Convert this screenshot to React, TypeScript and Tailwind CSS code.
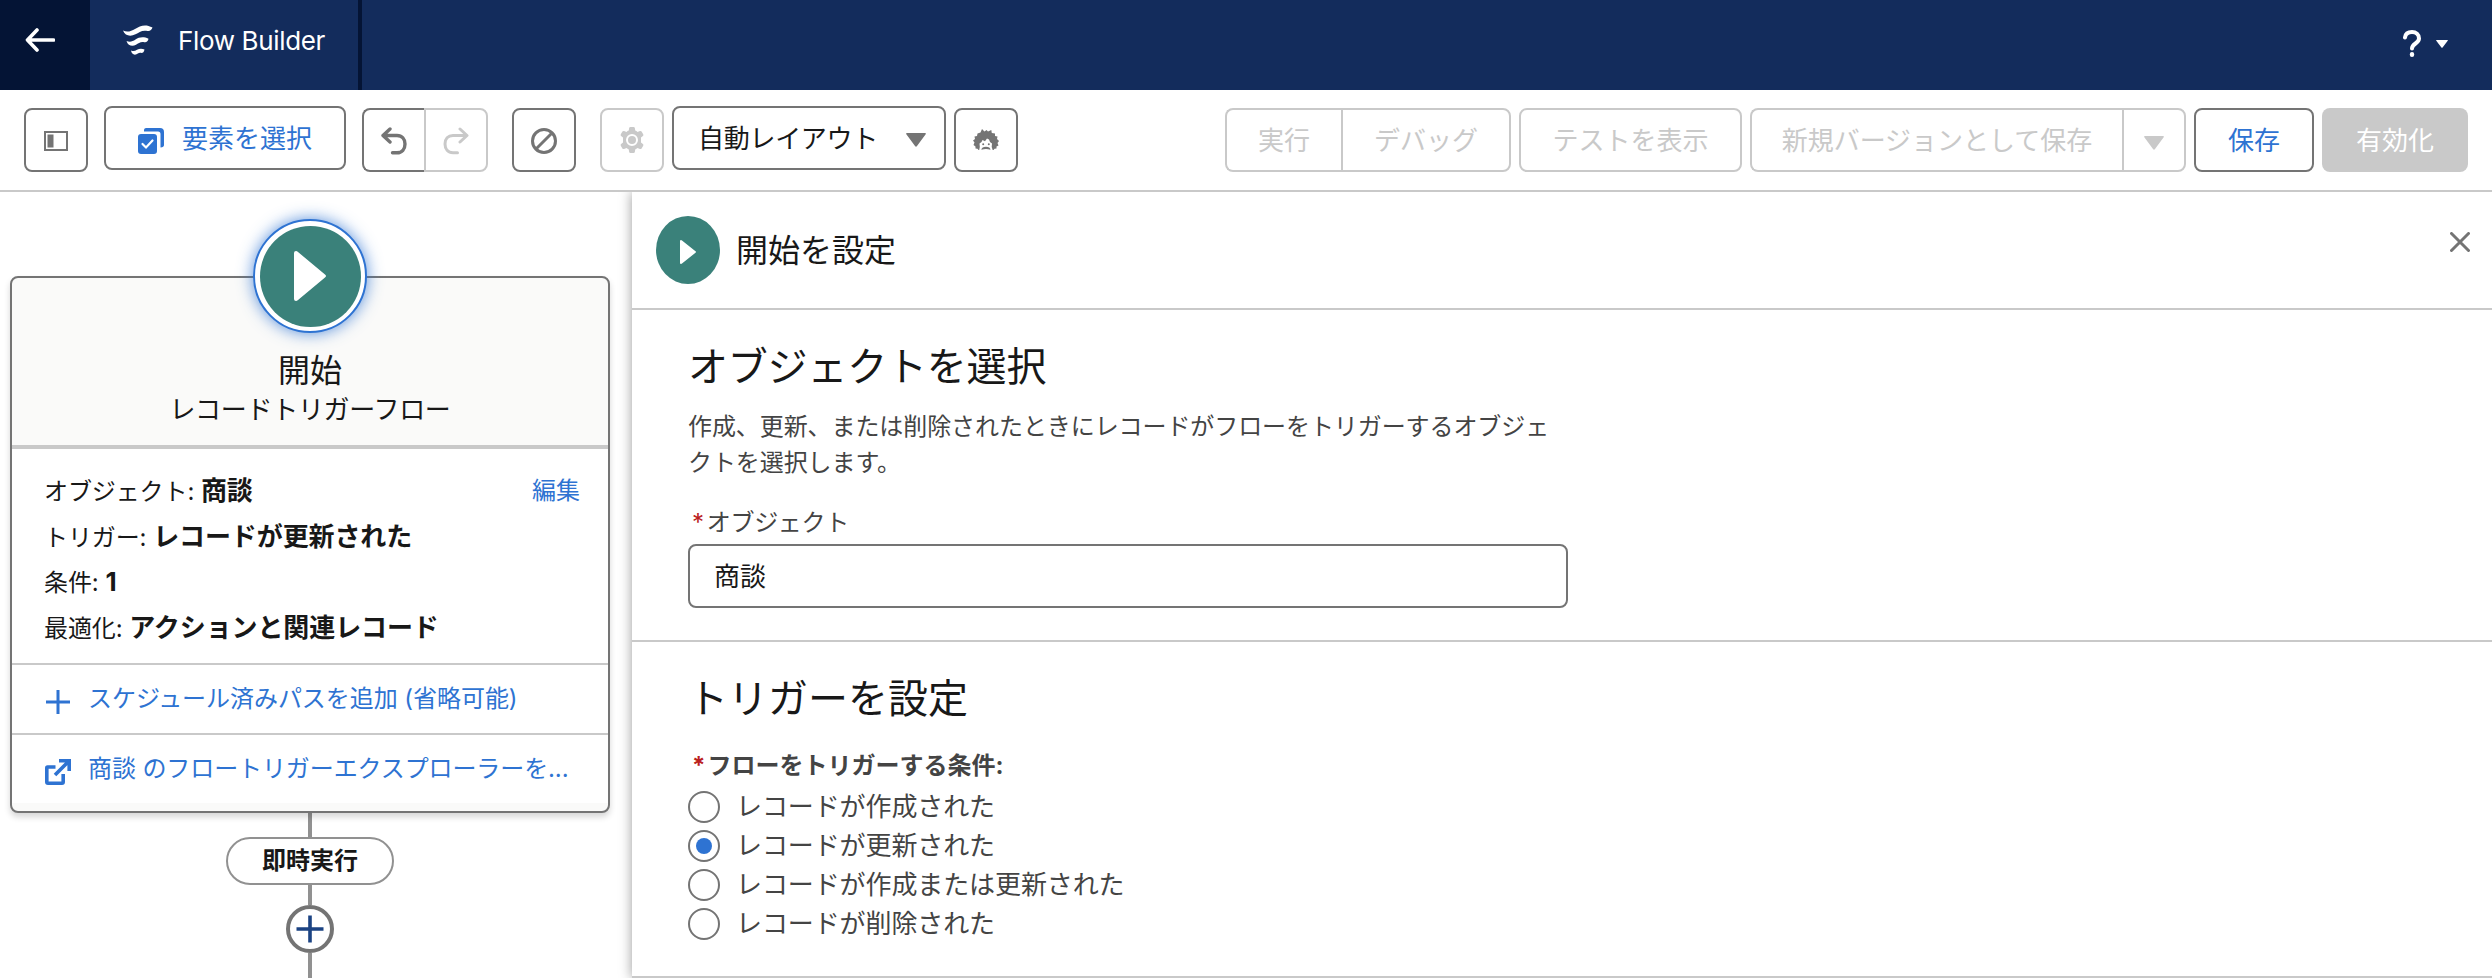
import { useState, type ReactNode } from "react"
import clsx from "clsx"

const triggerOptions = [
  "レコードが作成された",
  "レコードが更新された",
  "レコードが作成または更新された",
  "レコードが削除された",
]

const startDetails = [
  { label: "オブジェクト:", value: "商談" },
  { label: "トリガー:", value: "レコードが更新された" },
  { label: "条件:", value: "1" },
  { label: "最適化:", value: "アクションと関連レコード" },
]

const FlowLogo = () => (
  <svg className="h-8 w-8" viewBox="0 0 32 32" fill="#fff">
    <path d="M1 6.5C5 8.5 9 7.5 13 5C18 2 23 -.5 30.500 3.500C29.500 6 28 7.500 25.500 7C20 5.800 17 8.500 13.500 10.300C8.500 12.800 3 12 1 6.500Z" />
    <path d="M4.500 17C8 18.500 10.500 17.500 13.500 15.500C17 13.200 21.500 12.300 26.500 14.800C26 17.200 24.500 18.700 22.200 18.200C18.500 17.500 16.500 19.300 14 20.800C10.500 22.800 6 22 4.500 17Z" />
    <path d="M9 26.500C11.500 27.500 13 27 15 25.800C17.500 24.300 20 24.300 22.500 25.500C22 28.500 20.500 29.200 18.500 28.800C17 28.500 16 29.500 14.500 30.300C12 31.300 9.500 30 9 26.500Z" />
  </svg>
)

const Play = ({ className }: { className: string }) => (
  <svg className={className} viewBox="0 0 32 50" preserveAspectRatio="none" fill="#fff">
    <path d="M0 2Q0 0 2 0Q3 0 4 1L31 23.500Q33 25 31 26.500L4 49Q3 50 2 50Q0 50 0 48Z" />
  </svg>
)

const Caret = ({ className }: { className: string }) => (
  <svg className={className} viewBox="0 0 20 14" preserveAspectRatio="none" fill="currentColor">
    <path d="M1 0H19Q20.500 0 19.500 1.500L11 13Q10 14.500 9 13L.5 1.500Q-.5 0 1 0Z" />
  </svg>
)

const EinsteinIcon = () => (
  <svg className="h-[22px] w-[26px]" viewBox="0 0 26 22">
    <path
      fill="#747474"
      d="M7.500 3.500L9 0L11.500 2.500L13.500 1L15 2.600L18.300 1L18.800 4L22 4.500L22 7L24.500 7.500L24 10L26 12L24.500 14L25.500 16.500L23.500 17.500L23.500 19.500L21.500 19.800L20.500 21L5.500 21L4.500 19.800L2.500 19.500L2.500 17.500L.5 16L1.500 13.500L0 11.500L2 10L1.500 7.500L4 7L4.500 4.500Z"
    />
    <path fill="#fff" d="M6 22L6.800 18L6.500 14.500L8.500 13L9.500 11L12 12.200L14 9.500L16 10.500L17 13L19 14.500L18.700 18L20 22Z" />
    <circle cx="10.200" cy="15.200" r="1" fill="#747474" />
    <circle cx="15.800" cy="15.200" r="1" fill="#747474" />
    <path fill="#747474" d="M8.300 20.800Q8.800 17.800 13 17.800T17.500 20.800Q15 20 13 20T8.300 20.800Z" />
  </svg>
)

const GearIcon = () => (
  <svg className="h-[26px] w-6" viewBox="0 0 24 26">
    <path
      fill="#c9c9c9"
      fillRule="evenodd"
      d="M10.500 0H13.500Q14.700 0 14.900 1.200L15.200 3.600Q16.500 4.100 17.500 4.900L19.900 4Q21 3.600 21.600 4.600L23.200 7.200Q23.800 8.200 22.900 9L21 10.600V15.400L22.900 17Q23.800 17.800 23.200 18.800L21.600 21.400Q21 22.400 19.900 22L17.500 21.100Q16.500 21.900 15.200 22.400L14.900 24.800Q14.700 26 13.500 26H10.500Q9.300 26 9.100 24.800L8.800 22.400Q7.500 21.900 6.500 21.100L4.100 22Q3 22.400 2.400 21.400L.8 18.800Q.2 17.800 1.100 17L3 15.400V10.600L1.100 9Q.2 8.200 .8 7.200L2.400 4.600Q3 3.600 4.100 4L6.500 4.900Q7.500 4.100 8.800 3.600L9.100 1.200Q9.300 0 10.500 0ZM12 7A6 6 0 1 0 12 19A6 6 0 1 0 12 7Z"
    />
    <circle cx="12" cy="13" r="4" fill="#c9c9c9" />
  </svg>
)

const ToolButton = ({ children, className }: { children: ReactNode; className?: string }) => (
  <button
    className={clsx("flex h-16 shrink-0 items-center justify-center border-2 bg-white", className)}
  >
    {children}
  </button>
)

const Header = () => (
  <header className="flex h-[90px] bg-[#132c5c] text-white">
    <button className="flex w-[90px] items-center bg-[#041435] pb-[10px] pl-[25px]">
      <svg className="h-6 w-[30px]" viewBox="0 0 30 24" fill="none" stroke="#fff" strokeWidth="3.600" strokeLinecap="round" strokeLinejoin="round">
        <path d="M12 2L2.500 12L12 22M3 12H28.500" />
      </svg>
    </button>
    <div className="flex w-[272px] items-center border-r-4 border-[#041435] pb-[10px] pl-8">
      <FlowLogo />
      <span className="ml-6 text-[26px] tracking-[-0.35px]">Flow Builder</span>
    </div>
    <div className="ml-auto flex items-center gap-[15px] pb-[3px] pr-[44px]">
      <svg className="h-[27px] w-[18px]" viewBox="0 0 18 27" fill="none" stroke="#fff" strokeWidth="4" strokeLinecap="round">
        <path d="M2 7.500C2.500 3.500 5.500 2 9 2C13 2 16 4.500 16 8.500C16 13.500 9 13.500 9 18.500" />
        <path d="M9 24.200V24.800" strokeWidth="4.400" />
      </svg>
      <Caret className="h-2 w-3" />
    </div>
  </header>
)

const Toolbar = () => (
  <div className="flex h-[102px] items-start justify-between border-b-2 border-[#c9c9c9] bg-white px-6 pt-[18px] text-[26px]">
    <div className="flex">
      <ToolButton className="w-16 rounded-lg border-[#747474]">
        <svg className="mt-[2px] h-5 w-6" viewBox="0 0 24 20">
          <rect x="1" y="1" width="22" height="18" fill="none" stroke="#747474" strokeWidth="2" />
          <rect x="3.500" y="3.500" width="6" height="13" fill="#747474" />
        </svg>
      </ToolButton>
      <ToolButton className="-mt-[2px] ml-4 w-[242px] gap-[18px] rounded-lg border-[#747474] text-[#2e73d2]">
        <svg className="mt-[6px] h-[26px] w-[26px]" viewBox="0 0 26 26">
          <path d="M6 1.800Q6.300 0 8 0H22Q26 0 26 4V17Q26 19 22.500 19.500V6Q22.500 3.500 20 3.500H6Z" fill="#2e73d2" />
          <rect x="0" y="6" width="19" height="20" rx="3" fill="#2e73d2" />
          <path d="M4.500 16L8 19.500L14.500 12.500" fill="none" stroke="#fff" strokeWidth="2.200" strokeLinecap="round" />
        </svg>
        <span>要素を選択</span>
      </ToolButton>
      <ToolButton className="ml-4 w-[62px] rounded-l-lg border-r-0 border-[#747474]">
        <svg className="mt-[2px] h-[28px] w-[26px]" viewBox="0 0 26 28" fill="none" stroke="#747474" strokeWidth="3.400" strokeLinecap="round" strokeLinejoin="round">
          <path d="M9 2L2 8.500L9 15M3 8.500H16C21 8.500 24 12 24 17S21 25.800 16 25.800H11.500" />
        </svg>
      </ToolButton>
      <ToolButton className="w-16 rounded-r-lg border-[#c9c9c9]">
        <svg className="mt-[2px] h-[28px] w-[26px]" viewBox="0 0 26 28" fill="none" stroke="#c9c9c9" strokeWidth="3" strokeLinecap="round" strokeLinejoin="round">
          <path d="M17 2L24 8.500L17 15M23 8.500H10C5 8.500 2 12 2 17S5 25.800 10 25.800H14.500" />
        </svg>
      </ToolButton>
      <ToolButton className="ml-6 w-16 rounded-lg border-[#747474]">
        <svg className="mt-[2px] h-[26px] w-[26px]" viewBox="0 0 26 26" fill="none" stroke="#747474" strokeWidth="3">
          <circle cx="13" cy="13" r="11.500" />
          <path d="M5 21L21 5" />
        </svg>
      </ToolButton>
      <ToolButton className="ml-6 w-16 rounded-lg border-[#c9c9c9]">
        <GearIcon />
      </ToolButton>
      <ToolButton className="-mt-[2px] ml-2 w-[274px] rounded-lg border-[#747474] pl-[6px] text-[#181818]">
        <span className="tracking-[-0.3px]">自動レイアウト</span>
        <Caret className="ml-[28px] mt-[4px] h-[14px] w-5 text-[#747474]" />
      </ToolButton>
      <ToolButton className="ml-2 w-16 rounded-lg border-[#747474]">
        <EinsteinIcon />
      </ToolButton>
    </div>
    <div className="flex text-[#c9c9c9]">
      <ToolButton className="w-[116px] rounded-l-lg border-r-0 border-[#c9c9c9]">実行</ToolButton>
      <ToolButton className="w-[170px] rounded-r-lg border-[#c9c9c9]">デバッグ</ToolButton>
      <ToolButton className="ml-2 w-[223px] rounded-lg border-[#c9c9c9]">テストを表示</ToolButton>
      <ToolButton className="ml-2 w-[372px] rounded-l-lg border-r-0 border-[#c9c9c9]">新規バージョンとして保存</ToolButton>
      <ToolButton className="w-16 rounded-r-lg border-[#c9c9c9]">
        <Caret className="mt-[6px] h-[14px] w-5" />
      </ToolButton>
      <ToolButton className="ml-2 w-[120px] rounded-lg border-[#747474] text-[#2e73d2]">保存</ToolButton>
      <button className="ml-2 h-16 w-[146px] rounded-lg bg-[#c9c9c9] text-white">有効化</button>
    </div>
  </div>
)

const StartCard = () => (
  <div className="relative w-[600px] rounded-[8px] border-2 border-[#747474] bg-[#fafaf9] pb-2 text-[24px] text-[#181818] shadow-[0_4px_6px_rgba(0,0,0,0.16)]">
    <div className="absolute -top-[59px] left-[241px] flex h-[114px] w-[114px] items-center justify-center rounded-full border-2 border-[#2e73d2] bg-white shadow-[0_0_16px_rgba(46,115,210,0.8)]">
      <div className="flex h-[101px] w-[101px] items-center justify-center rounded-full bg-[#3a817a]">
        <Play className="h-[50px] w-8" />
      </div>
    </div>
    <div className="flex h-[171px] flex-col items-center border-b-4 border-[#c9c9c9] pt-[73px]">
      <h2 className="text-[32px] leading-[40px]">開始</h2>
      <p className="text-[26px] leading-[38px] tracking-[-0.3px]">レコードトリガーフロー</p>
    </div>
    <div className="relative h-[216px] border-b-2 border-[#c9c9c9] bg-white px-8 pt-[19px]">
      {startDetails.map((item) => (
        <p key={item.label} className="h-[45.500px] leading-[45.500px]">
          <span className="tracking-[-0.1px]">{item.label}</span> <b className="text-[26px] tracking-[-0.1px]">{item.value}</b>
        </p>
      ))}
      <a className="absolute right-[28px] top-[19px] leading-[45.500px] text-[#2e73d2]">編集</a>
    </div>
    <a className="flex h-[70px] items-center border-b-2 border-[#c9c9c9] bg-white pl-[34px] text-[#2e73d2]">
      <svg className="mt-[6px] h-6 w-6" viewBox="0 0 24 24" stroke="#2e73d2" strokeWidth="3">
        <path d="M12 0V24M0 12H24" />
      </svg>
      <span className="ml-[18px] tracking-[-0.05px]">スケジュール済みパスを追加 (省略可能)</span>
    </a>
    <a className="flex h-[68px] items-center bg-white pl-[33px] text-[#2e73d2]">
      <svg className="mt-[6px] h-[26px] w-[26px]" viewBox="0 0 26 26" fill="none" stroke="#2e73d2" strokeWidth="3.600">
        <path d="M10.500 8H2.500Q1.800 8 1.800 9V23Q1.800 24.200 3 24.200H17Q18.200 24.200 18.200 23V15" />
        <path d="M14 1.800H24.200V12M24 2L10 16" />
      </svg>
      <span className="ml-[17px] tracking-[-0.1px]">商談 のフロートリガーエクスプローラーを...</span>
    </a>
  </div>
)

const Canvas = () => (
  <div className="w-[632px] bg-white pl-[10px] pt-[84px]">
    <StartCard />
    <div className="flex w-[600px] flex-col items-center">
      <div className="h-6 w-1 bg-[#919191]" />
      <div className="flex h-12 w-[168px] items-center justify-center rounded-full border-2 border-[#919191] bg-white text-[24px] font-bold text-[#181818]">
        即時実行
      </div>
      <div className="h-5 w-1 bg-[#919191]" />
      <button className="flex h-12 w-12 items-center justify-center rounded-full border-4 border-[#747474] bg-white">
        <svg className="h-7 w-7" viewBox="0 0 28 28" stroke="#1b4383" strokeWidth="3.600">
          <path d="M14 .5V27.500M.5 14H27.500" />
        </svg>
      </button>
      <div className="h-[25px] w-1 bg-[#919191]" />
    </div>
  </div>
)

const PropertyPanel = () => {
  const [trigger, setTrigger] = useState(triggerOptions[1])

  return (
    <div className="relative flex flex-1 flex-col bg-white text-[#444] shadow-[0_0_12px_rgba(0,0,0,0.4)] [clip-path:inset(0_0_0_-24px)]">
      <div className="flex h-[118px] shrink-0 items-center border-b-2 border-[#c9c9c9] pl-6 pr-[22px]">
        <div className="flex h-[68px] w-16 items-center justify-center rounded-[50%] bg-[#3a817a]">
          <Play className="mt-[3px] h-6 w-4" />
        </div>
        <h2 className="ml-4 mt-px text-[32px] text-[#181818]">開始を設定</h2>
        <button className="mb-4 ml-auto">
          <svg className="h-5 w-5" viewBox="0 0 20 20" stroke="#747474" strokeWidth="3" strokeLinecap="round">
            <path d="M1.500 1.500L18.500 18.500M18.500 1.500L1.500 18.500" />
          </svg>
        </button>
      </div>
      <section className="h-[332px] shrink-0 border-b-2 border-[#c9c9c9] pl-14 pt-[27px]">
        <h1 className="text-[40px] leading-[60px] tracking-[-0.2px] text-[#181818]">オブジェクトを選択</h1>
        <p className="mt-[12px] w-[880px] text-[24px] leading-9 tracking-[-0.08px]">
          作成、更新、または削除されたときにレコードがフローをトリガーするオブジェクトを選択します。
        </p>
        <label className="mt-[21px] flex h-[42px] items-center text-[24px] tracking-[-0.3px]">
          <abbr className="ml-1 mr-[3px] text-[#ba2020]">*</abbr>オブジェクト
        </label>
        <div className="flex h-16 w-[880px] items-center rounded-lg border-2 border-[#747474] px-6 text-[26px] text-[#181818]">
          商談
        </div>
      </section>
      <section className="h-[336px] shrink-0 border-b-2 border-[#c9c9c9] pl-14 pt-[27px]">
        <h1 className="text-[40px] leading-[60px] text-[#181818]">トリガーを設定</h1>
        <div className="mt-[19px] flex h-9 items-center text-[24px] font-bold">
          <abbr className="ml-1 mr-[2px] text-[#ba2020]">*</abbr>フローをトリガーする条件:
        </div>
        <div className="mt-[3px]">
          {triggerOptions.map((option) => (
            <label key={option} className="flex h-[39px] items-center text-[26px]" onClick={() => setTrigger(option)}>
              <span className="flex h-8 w-8 items-center justify-center rounded-full border-2 border-[#747474]">
                {trigger === option && <span className="h-4 w-4 rounded-full bg-[#2e73d2]" />}
              </span>
              <span className="ml-4 tracking-[-0.1px]">{option}</span>
            </label>
          ))}
        </div>
      </section>
    </div>
  )
}

const App = () => {
  return (
    <div className="flex h-[978px] w-[2492px] flex-col overflow-hidden bg-white font-['Inter','Noto_Sans_CJK_JP',sans-serif]">
      <Header />
      <Toolbar />
      <main className="flex flex-1">
        <Canvas />
        <PropertyPanel />
      </main>
    </div>
  )
}

export default App
